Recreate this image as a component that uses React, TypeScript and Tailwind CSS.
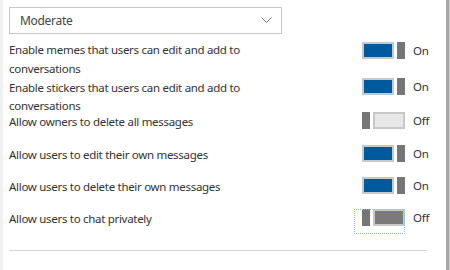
import React from "react";

type ToggleProps = { on: boolean; focused?: boolean };

function Toggle({ on, focused }: ToggleProps) {
  return (
    <div className="flex items-start">
      <div
        className={
          "w-[51px] h-[25px] pl-[8px] flex items-start " +
          (focused ? "outline outline-1 outline-dotted outline-[#86bdf0] -outline-offset-1" : "")
        }
      >
        {on ? (
          <div className="flex items-start gap-[3px]">
            <div className="w-[32px] h-[17px] border-2 border-[#c8c8c8] bg-[#005a9e]" />
            <div className="w-[8px] h-[17px] bg-[#767676]" />
          </div>
        ) : (
          <div className="flex items-start gap-[3px]">
            <div className="w-[8px] h-[17px] bg-[#767676]" />
            <div
              className={
                "w-[32px] h-[17px] border-2 border-[#c8c8c8] " +
                (focused ? "bg-[#7a7a7a]" : "bg-[#e8e8e8]")
              }
            />
          </div>
        )}
      </div>
      <span className="ml-[8px] text-[11.5px] tracking-[-0.2px] leading-[17px] text-[#333]">
        {on ? "On" : "Off"}
      </span>
    </div>
  );
}

type RowProps = {
  text: React.ReactNode;
  on: boolean;
  focused?: boolean;
  h: string;
  textCls: string;
  tmt?: string;
};

function Row({ text, on, focused, h, textCls, tmt }: RowProps) {
  return (
    <div className={"flex items-start justify-between " + h}>
      <div className={"w-[345px] text-[11.5px] tracking-[-0.3px] text-[#333] pr-2 " + textCls}>
        {text}
      </div>
      <div className={"w-[92px] " + (tmt ?? "")}>
        <Toggle on={on} focused={focused} />
      </div>
    </div>
  );
}

export default function App() {
  return (
    <div
      className="w-[450px] h-[270px] flex bg-white overflow-hidden"
      style={{ fontFamily: '"Noto Sans", "Open Sans", sans-serif' }}
    >
      <div className="w-[3px] h-full bg-[#f0f0f0]" />
      <div className="flex-1 pl-[6px] pt-[7px] flex flex-col">
        <div className="w-[273px] h-[27px] shrink-0 border border-[#c8c8c8] flex items-center justify-between pl-[10px] pr-[8px]">
          <span className="text-[12px] tracking-[-0.3px] text-[#444]">Moderate</span>
          <svg width="11" height="7" viewBox="0 0 11 7" className="mr-[1px]">
            <polyline points="0.5,0.5 5.5,5.5 10.5,0.5" fill="none" stroke="#777" strokeWidth="1" />
          </svg>
        </div>
        <div className="h-[6px] shrink-0" />
        <Row
          h="h-[38px] shrink-0"
          textCls="leading-[19px]"
          tmt="mt-[2px]"
          on={true}
          text={
            <>
              Enable memes that users can edit and add to
              <br />
              conversations
            </>
          }
        />
        <Row
          h="h-[34px] shrink-0"
          textCls="leading-[18px] pt-[1px]"
          on={true}
          text={
            <>
              Enable stickers that users can edit and add to
              <br />
              conversations
            </>
          }
        />
        <Row
          h="h-[33px] shrink-0"
          textCls="leading-[14px] pt-[3px]"
          on={false}
          text="Allow owners to delete all messages"
        />
        <Row
          h="h-[32px] shrink-0"
          textCls="leading-[14px] pt-[3px]"
          on={true}
          text="Allow users to edit their own messages"
        />
        <Row
          h="h-[32px] shrink-0"
          textCls="leading-[14px] pt-[3px]"
          on={true}
          text="Allow users to delete their own messages"
        />
        <Row
          h="h-[41px] shrink-0"
          textCls="leading-[14px] pt-[3px]"
          on={false}
          focused
          text="Allow users to chat privately"
        />
        <div className="w-[418px] h-px shrink-0 bg-[#d6d6d6]" />
      </div>
      <div className="w-[3px] h-full bg-[#a6a6a6]" />
      <div className="w-[1px] h-full bg-[#d0d0d0]" />
    </div>
  );
}
